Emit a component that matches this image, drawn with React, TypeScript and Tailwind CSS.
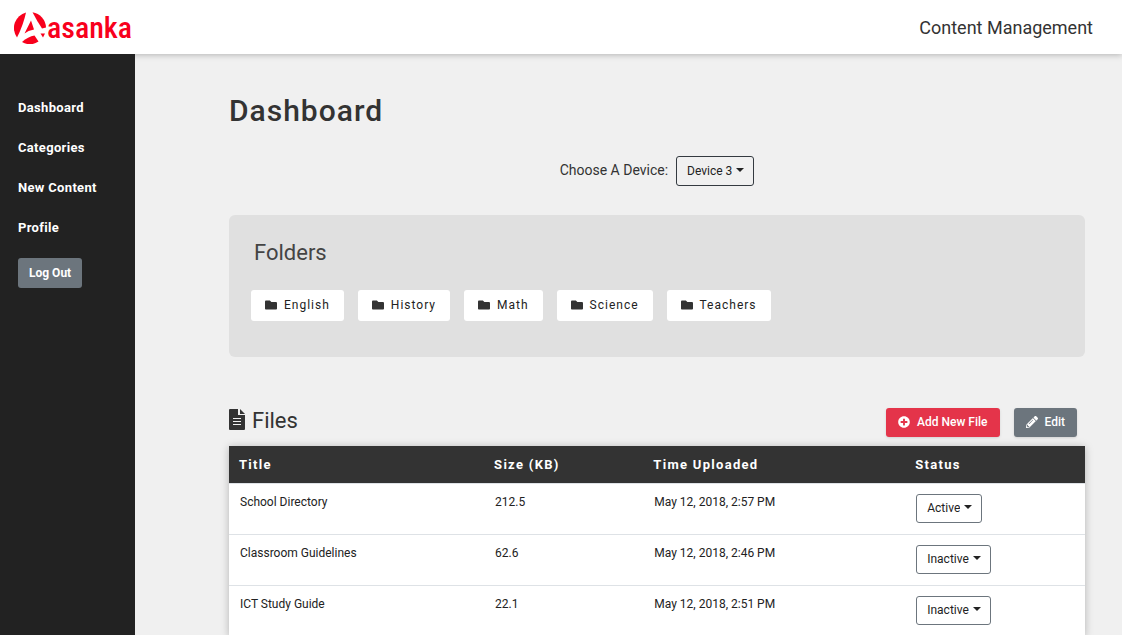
import { useState } from "react";
import { FaPlusCircle, FaPencilAlt, FaFolder } from "react-icons/fa";

const navItems = ["Dashboard", "Categories", "New Content", "Profile"];
const folders = ["English", "History", "Math", "Science", "Teachers"];
const files = [
  { title: "School Directory", size: "212.5", time: "May 12, 2018, 2:57 PM", status: "Active" },
  { title: "Classroom Guidelines", size: "62.6", time: "May 12, 2018, 2:46 PM", status: "Inactive" },
  { title: "ICT Study Guide", size: "22.1", time: "May 12, 2018, 2:51 PM", status: "Inactive" },
];

function Logo() {
  return (
    <a href="#" aria-label="Aasanka" className="flex items-center gap-px pt-0.5">
      <svg viewBox="0 0 32 32" className="size-8" aria-hidden="true">
        <path fill="#f8001c" d="M12 0.5 A16 16 0 0 0 3 25.4 Q9 14 12 0.5 Z" />
        <path fill="#f8001c" d="M18.5 0.2 A16 16 0 0 1 32 15.6 L28 16.5 Q23 9 18.5 0.2 Z" />
        <path fill="#f8001c" d="M17 8.5 L20 17.5 Q14 18.5 10.5 21.5 Z" />
        <path fill="#f8001c" d="M8 30 Q14 24.5 20.5 23.5 L24.5 29.6 A16 16 0 0 1 8 30 Z" />
        <path fill="#f8001c" d="M26.5 21.5 L31 21.5 L29 25.5 Z" />
      </svg>
      <span className="font-['Liberation_Sans_Narrow','Roboto_Condensed','Open_Sans_Condensed','Noto_Sans_Condensed',Roboto,sans-serif] text-3xl leading-8 font-medium text-[#f8001c]">asanka</span>
    </a>
  );
}

function Dropdown({ id, label, value, options, className }: {
  id: string;
  label: string;
  value: string;
  options: string[];
  className: string;
}) {
  const [selected, setSelected] = useState(value);
  return (
    <span className="relative inline-flex items-center">
      <select
        id={id}
        aria-label={label}
        value={selected}
        onChange={(e) => setSelected(e.target.value)}
        className={`cursor-pointer appearance-none rounded-[3px] border pr-[21px] pl-2.5 text-xs text-[#222] [field-sizing:content] ${className}`}
      >
        {options.map((o) => <option key={o}>{o}</option>)}
      </select>
      <span className="pointer-events-none absolute right-2.5 mb-0.5 border-x-4 border-t-4 border-x-transparent border-t-[#222]" />
    </span>
  );
}

export default function App() {
  return (
    <div className="flex h-screen flex-col overflow-hidden bg-[#f0f0f0] font-[Roboto,sans-serif] text-[#333]">
      <header className="z-10 flex h-[54px] shrink-0 items-center justify-between bg-white pr-[29px] pl-3.5 shadow-[0_1px_6px_rgba(0,0,0,0.25)]">
        <Logo />
        <span className="pt-0.5 text-lg">Content Management</span>
      </header>
      <div className="flex min-h-0 flex-1">
        <nav className="z-20 flex w-[135px] shrink-0 flex-col items-start bg-[#222] px-[18px] pt-11">
          {navItems.map((item) => (
            <a key={item} href="#" className="mb-5 text-[13px] leading-5 font-bold tracking-wide whitespace-nowrap text-white">{item}</a>
          ))}
          <button type="button" className="h-[30px] rounded-[3px] bg-[#6c757d] px-[11px] text-xs font-bold text-white">Log Out</button>
        </nav>
        <main className="min-w-0 flex-1 overflow-hidden pt-9 pr-[37px] pl-[94px]">
          <h1 className="text-3xl leading-[42px] font-medium tracking-[1px]">Dashboard</h1>
          <div className="mt-6 flex items-center justify-center gap-2">
            <label htmlFor="device" className="pb-0.5 text-sm">Choose A Device:</label>
            <Dropdown id="device" label="Choose A Device" value="Device 3" options={["Device 1", "Device 2", "Device 3"]} className="h-[30px] border-[#343a40]" />
          </div>
          <section className="mt-[29px] rounded-md bg-[#e0e0e0] px-[22px] pt-[21px] pb-9">
            <h2 className="px-[3px] text-[22px] leading-[34px] text-[#444]">Folders</h2>
            <div className="mt-5 flex flex-wrap gap-3.5">
              {folders.map((folder) => (
                <button key={folder} type="button" className="flex h-[31px] items-center gap-[7px] rounded-[3px] bg-white px-3.5 pb-0.5 text-xs tracking-[1px] text-[#222]">
                  <FaFolder className="size-3 text-[#333]" />
                  {folder}
                </button>
              ))}
            </div>
          </section>
          <section className="mt-12">
            <div className="mb-[9px] flex items-end justify-between pr-2">
              <h2 className="flex items-center gap-[7px] pb-px text-[22px] leading-[30px]">
                <svg viewBox="0 0 16 21" className="mb-1 h-[21px] w-4" fill="#333" aria-hidden="true">
                  <path fillRule="evenodd" d="M1 0 H9 V6 H16 V20 Q16 21 15 21 H1 Q0 21 0 20 V1 Q0 0 1 0 Z M4 9 V10 H12 V9 Z M4 12 V13 H12 V12 Z M4 15 V16 H12 V15 Z" />
                  <path d="M11 0 L16 5 H11 Z" />
                </svg>
                Files
              </h2>
              <div className="flex gap-3.5 pt-[3px]">
                <button type="button" className="flex h-[29px] items-center gap-[7px] rounded-[3px] bg-[#e4344a] px-3 pb-0.5 text-xs font-medium text-white shadow-sm">
                  <FaPlusCircle className="size-3" />
                  Add New File
                </button>
                <button type="button" className="flex h-[29px] items-center gap-[7px] rounded-[3px] bg-[#6c757d] px-3 pb-0.5 text-xs font-medium text-white shadow-sm">
                  <FaPencilAlt className="size-3" />
                  Edit
                </button>
              </div>
            </div>
            <table className="w-full table-fixed border-collapse bg-white text-left text-xs text-[#222] shadow-[0_1px_8px_rgba(0,0,0,0.25)]">
              <colgroup>
                <col className="w-[29.8%]" />
                <col className="w-[18.6%]" />
                <col className="w-[30.6%]" />
                <col />
              </colgroup>
              <thead className="bg-[#333] text-white">
                <tr className="h-[37px]">
                  {["Title", "Size (KB)", "Time Uploaded", "Status"].map((h) => (
                    <th key={h} scope="col" className="px-2.5 text-[13px] font-bold tracking-widest">{h}</th>
                  ))}
                </tr>
              </thead>
              <tbody>
                {files.map((f) => (
                  <tr key={f.title} className="h-[51px] border-t border-[#dee2e6] align-top">
                    <td className="px-[11px] pt-2.5">{f.title}</td>
                    <td className="px-[11px] pt-2.5">{f.size}</td>
                    <td className="px-[11px] pt-2.5">{f.time}</td>
                    <td className="px-[11px] pt-2.5">
                      <Dropdown id={f.title.replaceAll(" ", "-")} label={`Status of ${f.title}`} value={f.status} options={["Active", "Inactive"]} className="h-[29px] border-[#6c757d] bg-white" />
                    </td>
                  </tr>
                ))}
              </tbody>
            </table>
          </section>
        </main>
      </div>
    </div>
  );
}
